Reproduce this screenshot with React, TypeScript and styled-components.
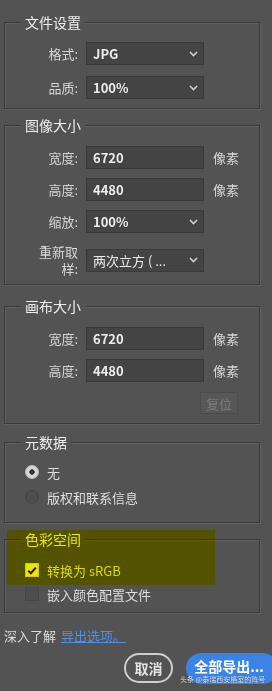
import React from "react";
import styled, { createGlobalStyle } from "styled-components";

const GlobalStyle = createGlobalStyle`
  html, body {
    margin: 0;
    padding: 0;
    background: #535353;
    overflow: hidden;
  }
  body {
    font-family: "Noto Sans CJK SC", "Noto Sans", sans-serif;
    color: #dcdcdc;
  }
`;

const Chevron = () => (
  <svg width="9" height="6" viewBox="0 0 9 6">
    <path d="M1 1 L4.5 4.5 L8 1" fill="none" stroke="#d0d0d0" strokeWidth="1.6" />
  </svg>
);

const Check = () => (
  <svg width="10" height="9" viewBox="0 0 10 9">
    <path d="M1.2 4.6 L3.8 7.2 L8.8 1.6" fill="none" stroke="#1e1e1e" strokeWidth="2" />
  </svg>
);

export default function App() {
  return (
    <Panel>
      <GlobalStyle />

      <Group $mt={0}>
        <Legend>文件设置</Legend>
        <Rows $pt={10} $pb={9} $gap={11}>
          <Row>
            <Label>格式:</Label>
            <Field>JPG<Chevron /></Field>
          </Row>
          <Row>
            <Label>品质:</Label>
            <Field>100%<Chevron /></Field>
          </Row>
        </Rows>
      </Group>

      <Group $mt={6}>
        <Legend>图像大小</Legend>
        <Rows $pt={11} $pb={7} $gap={9}>
          <Row>
            <Label>宽度:</Label>
            <Field>6720</Field>
            <Unit>像素</Unit>
          </Row>
          <Row>
            <Label>高度:</Label>
            <Field>4480</Field>
            <Unit>像素</Unit>
          </Row>
          <Row>
            <Label>缩放:</Label>
            <Field>100%<Chevron /></Field>
          </Row>
          <TallRow>
            <WrapLabel>重新取样:</WrapLabel>
            <Field $light>两次立方 ( ...<Chevron /></Field>
          </TallRow>
        </Rows>
      </Group>

      <Group $mt={11}>
        <Legend>画布大小</Legend>
        <Rows $pt={11} $pb={9} $gap={9}>
          <Row>
            <Label>宽度:</Label>
            <Field>6720</Field>
            <Unit>像素</Unit>
          </Row>
          <Row>
            <Label>高度:</Label>
            <Field>4480</Field>
            <Unit>像素</Unit>
          </Row>
          <ResetRow>
            <ResetButton disabled>复位</ResetButton>
          </ResetRow>
        </Rows>
      </Group>

      <Group $mt={8}>
        <Legend>元数据</Legend>
        <Rows $pt={10} $pb={15} $gap={5} $pl={20}>
          <Option>
            <Radio $on />
            无
          </Option>
          <Option>
            <Radio />
            版权和联系信息
          </Option>
        </Rows>
      </Group>

      <Group $mt={6}>
        <Legend>色彩空间</Legend>
        <Rows $pt={11} $pb={8} $gap={4} $pl={20}>
          <Option>
            <Box $on><Check /></Box>
            转换为 sRGB
          </Option>
          <Option>
            <Box />
            嵌入颜色配置文件
          </Option>
        </Rows>
      </Group>

      <LearnMore>
        深入了解 <Link>导出选项。</Link>
      </LearnMore>

      <Actions>
        <CancelButton>取消</CancelButton>
        <ExportButton>全部导出...</ExportButton>
      </Actions>

      <Highlight />
      <Watermark>头条 @泰瑞西安格室的阵号</Watermark>
    </Panel>
  );
}

const Panel = styled.div`
  position: relative;
  width: 272px;
  height: 691px;
  padding-top: 12px;
  box-sizing: border-box;
`;

const Group = styled.fieldset<{ $mt: number }>`
  margin: ${({ $mt }) => $mt}px 0 0 4px;
  width: 256px;
  box-sizing: border-box;
  padding: 0;
  min-inline-size: 0;
  border: 1px solid #3c3c3c;
  box-shadow: inset 1px 1px 0 #606060, 1px 1px 0 #606060;
`;

const Legend = styled.legend`
  margin-left: 16px;
  padding: 0 4px;
  font-size: 14px;
  line-height: 20px;
  color: #efefef;
  background: #535353;
`;

const Rows = styled.div<{ $pt: number; $pb: number; $gap: number; $pl?: number }>`
  display: flex;
  flex-direction: column;
  gap: ${({ $gap }) => $gap}px;
  padding: ${({ $pt }) => $pt}px 0 ${({ $pb }) => $pb}px ${({ $pl }) => $pl ?? 0}px;
`;

const Row = styled.div`
  display: flex;
  align-items: center;
  height: 23px;
`;

const TallRow = styled(Row)`
  height: 34px;
  margin-top: 1px;
`;

const Label = styled.div`
  width: 73px;
  margin-right: 8px;
  text-align: right;
  font-size: 13px;
  color: #d6d6d6;
`;

const WrapLabel = styled(Label)`
  box-sizing: border-box;
  padding-left: 31px;
  line-height: 17px;
`;

const Field = styled.div<{ $light?: boolean }>`
  width: 118px;
  height: 23px;
  box-sizing: border-box;
  display: flex;
  align-items: center;
  justify-content: space-between;
  padding: 0 5px 0 6px;
  background: #444444;
  border: 1px solid #3a3a3a;
  font-size: 13px;
  font-weight: ${({ $light }) => ($light ? 400 : 700)};
  color: #ececec;
`;

const Unit = styled.div`
  margin-left: 9px;
  font-size: 13px;
  color: #d6d6d6;
`;

const ResetRow = styled.div`
  display: flex;
  padding-left: 195px;
  margin-top: 1px;
`;

const ResetButton = styled.button`
  width: 38px;
  height: 22px;
  padding: 0;
  background: #575757;
  border: 1px solid #4b4b4b;
  font-family: inherit;
  font-size: 13px;
  color: #7c7c7c;
`;

const Option = styled.div`
  display: flex;
  align-items: center;
  gap: 8px;
  height: 20px;
  font-size: 13px;
  color: #dedede;
`;

const Radio = styled.span<{ $on?: boolean }>`
  width: 14px;
  height: 14px;
  box-sizing: border-box;
  border-radius: 50%;
  border: 1px solid ${({ $on }) => ($on ? "#bdbdbd" : "#444")};
  background: ${({ $on }) =>
    $on ? "radial-gradient(circle, #3c3c3c 0 2.5px, #d9d9d9 3px)" : "#4d4d4d"};
`;

const Box = styled.span<{ $on?: boolean }>`
  width: 14px;
  height: 14px;
  box-sizing: border-box;
  display: flex;
  align-items: center;
  justify-content: center;
  border: 1px solid ${({ $on }) => ($on ? "#d0d0d0" : "#454545")};
  background: ${({ $on }) => ($on ? "#ececec" : "#4d4d4d")};
`;

const LearnMore = styled.div`
  margin: 13px 0 0 4px;
  font-size: 13px;
  line-height: 20px;
  color: #dcdcdc;
`;

const Link = styled.a`
  margin-left: 2px;
  color: #4d92e6;
  text-decoration: underline;
`;

const Actions = styled.div`
  display: flex;
  justify-content: flex-end;
  gap: 13px;
  margin: 7px -6px 0 0;
`;

const CancelButton = styled.button`
  width: 49px;
  height: 30px;
  padding: 0;
  border: 2px solid #cfcfcf;
  border-radius: 15px;
  background: transparent;
  font-family: inherit;
  font-size: 14px;
  font-weight: 700;
  color: #e2e2e2;
`;

const ExportButton = styled.button`
  width: 92px;
  height: 31px;
  padding: 0 6px 6px 0;
  border: none;
  border-radius: 16px;
  background: #3b84e6;
  font-family: inherit;
  font-size: 14px;
  font-weight: 700;
  color: #ffffff;
`;

const Highlight = styled.div`
  position: absolute;
  left: 7px;
  top: 530px;
  width: 208px;
  height: 55px;
  background: #fffa00;
  mix-blend-mode: multiply;
  pointer-events: none;
`;

const Watermark = styled.div`
  position: absolute;
  left: 180px;
  top: 675px;
  font-size: 7px;
  line-height: 9px;
  color: rgba(255, 255, 255, 0.85);
  text-shadow: 0 0 1px rgba(0, 0, 0, 0.6);
  white-space: nowrap;
`;
